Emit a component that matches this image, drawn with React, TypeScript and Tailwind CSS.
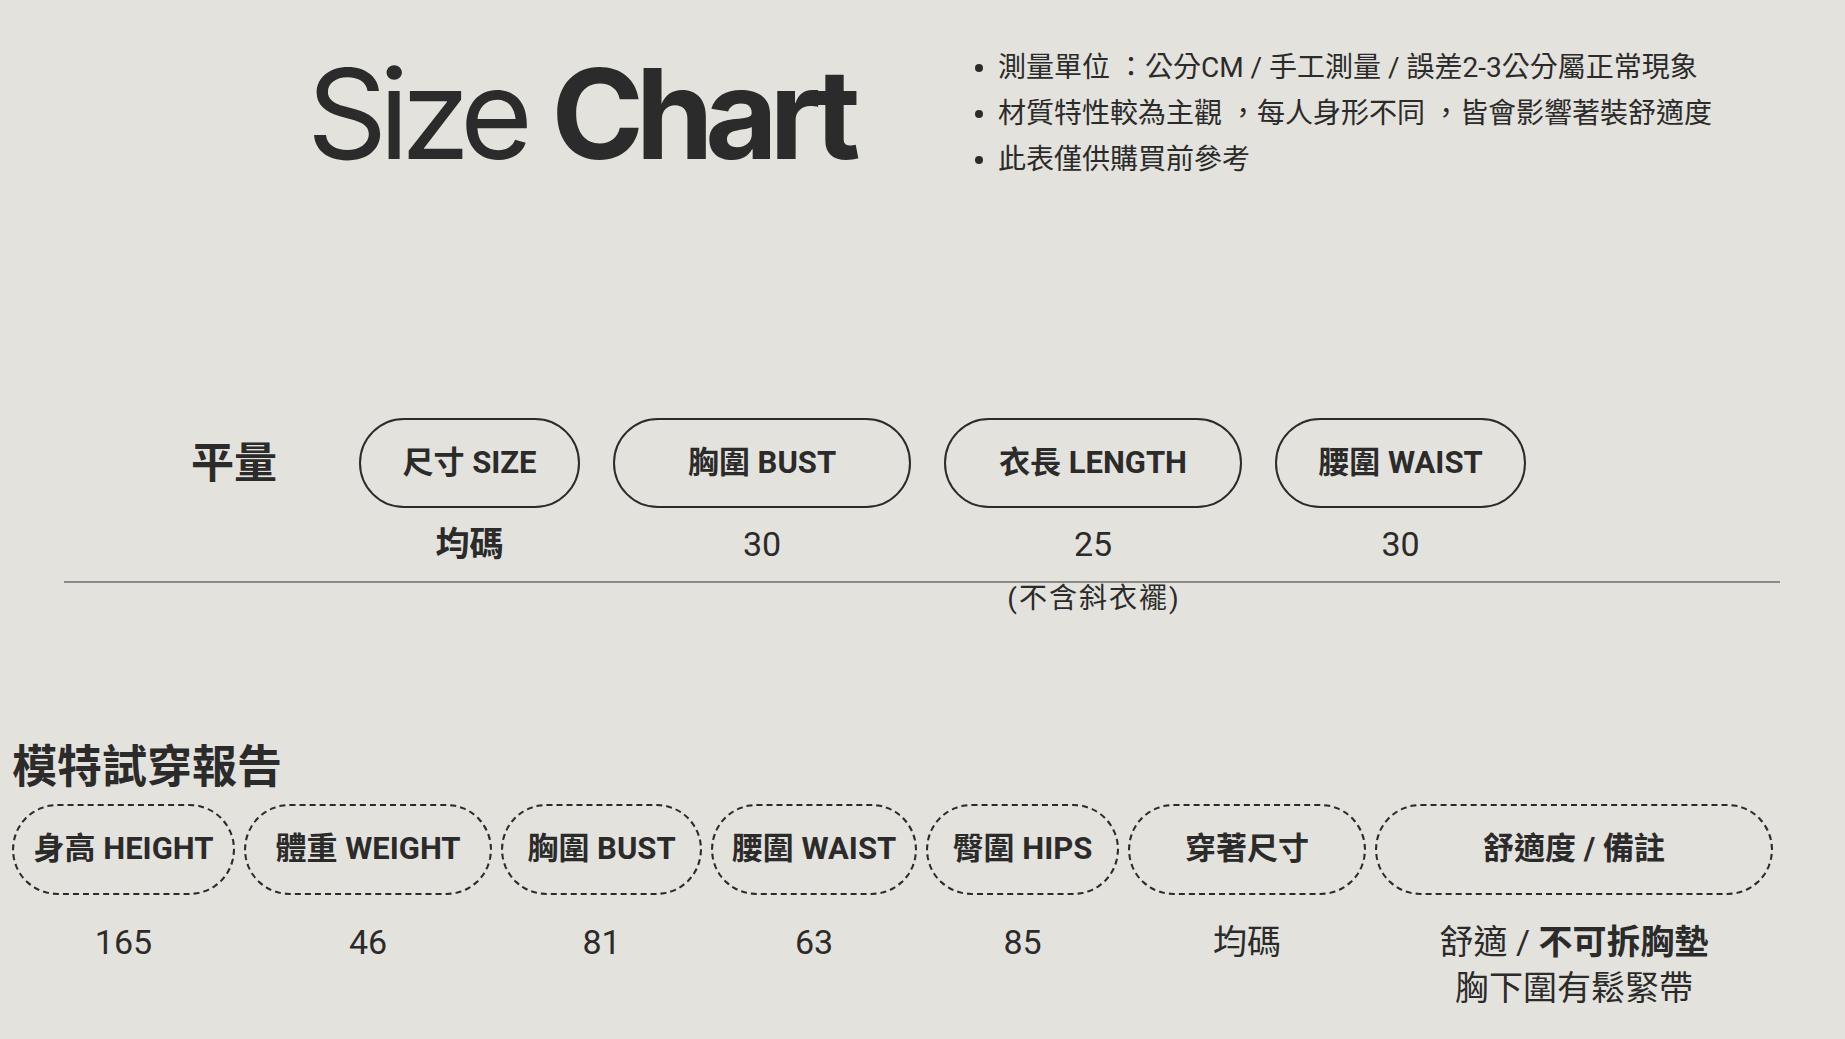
import React from "react";

const base = { fontFamily: 'Roboto, "Noto Sans CJK TC", "Noto Sans", sans-serif' };

const flat = [
  { label: "尺寸 SIZE", w: "w-[221px]", value: "均碼", bold: true },
  { label: "胸圍 BUST", w: "w-[298px]", value: "30" },
  { label: "衣長 LENGTH", w: "w-[298px]", value: "25" },
  { label: "腰圍 WAIST", w: "w-[251px]", value: "30" },
];

const fit = [
  { label: "身高 HEIGHT", w: "w-[223px]", value: ["165"] },
  { label: "體重 WEIGHT", w: "w-[248px]", value: ["46"] },
  { label: "胸圍 BUST", w: "w-[201px]", value: ["81"] },
  { label: "腰圍 WAIST", w: "w-[206px]", value: ["63"] },
  { label: "臀圍 HIPS", w: "w-[193px]", value: ["85"] },
  { label: "穿著尺寸", w: "w-[238px]", value: ["均碼"] },
  { label: "舒適度 / 備註", w: "w-[398px]", value: [] },
];

const notes = [
  "測量單位 ：公分CM / 手工測量 / 誤差2-3公分屬正常現象",
  "材質特性較為主觀 ，每人身形不同 ，皆會影響著裝舒適度",
  "此表僅供購買前參考",
];

export default function App() {
  return (
    <div
      className="w-[1845px] h-[1039px] overflow-hidden bg-[#e3e2dd] text-[#2b2b2b]"
      style={base}
    >
      {/* Header */}
      <div className="flex items-start pt-[45px]">
        <div className="w-[975px] pl-[307px] pt-[6px] shrink-0">
          <h1
            className="text-[125px] leading-none tracking-[-0.066em] whitespace-nowrap"
            style={{ fontFamily: "Inter, sans-serif" }}
          >
            Size <span className="font-bold">Chart</span>
          </h1>
        </div>
        <ul className="text-[28px] leading-[46px]">
          {notes.map((n) => (
            <li key={n} className="flex items-center gap-[15px] whitespace-nowrap">
              <span className="w-[8px] h-[8px] rounded-full bg-[#2b2b2b] shrink-0" />
              {n}
            </li>
          ))}
        </ul>
      </div>

      {/* 平量 */}
      <div className="flex items-start mt-[235px]">
        <div className="w-[359px] pl-[191px] h-[90px] flex items-center shrink-0">
          <span className="text-[43px] font-bold leading-none">平量</span>
        </div>
        <div className="flex gap-[33px]">
          {flat.map((c) => (
            <div key={c.label} className={`${c.w} flex flex-col items-center`}>
              <div className="w-full h-[90px] rounded-full border-2 border-[#2b2b2b] flex items-center justify-center text-[31px] font-bold whitespace-nowrap">
                {c.label}
              </div>
              <div
                className={`mt-[16px] text-[34px] leading-[40px] ${c.bold ? "font-bold" : ""}`}
              >
                {c.value}
              </div>
            </div>
          ))}
        </div>
      </div>
      <div className="ml-[64px] w-[1716px] h-[2px] bg-[#8a8a88] mt-[17px]" />
      <div className="flex">
        <div className="w-[945px] shrink-0" />
        <div className="w-[298px] text-center text-[28px] leading-[32px] tracking-[2px]">
          (不含斜衣襬)
        </div>
      </div>

      {/* 模特試穿報告 */}
      <h2 className="pl-[12px] mt-[128px] text-[45px] font-bold leading-[50px]">
        模特試穿報告
      </h2>
      <div className="flex gap-[9px] pl-[12px] mt-[11px]">
        {fit.map((c) => (
          <div key={c.label} className={`${c.w} flex flex-col items-center`}>
            <div className="w-full h-[91px] rounded-full border-2 border-dashed border-[#2b2b2b] flex items-center justify-center text-[31px] font-bold whitespace-nowrap">
              {c.label}
            </div>
            <div className="mt-[24px] text-[34px] leading-[46px] text-center whitespace-nowrap">
              {c.value.length > 0 ? (
                c.value.map((v) => <div key={v}>{v}</div>)
              ) : (
                <>
                  <div>
                    舒適 / <span className="font-bold">不可拆胸墊</span>
                  </div>
                  <div>胸下圍有鬆緊帶</div>
                </>
              )}
            </div>
          </div>
        ))}
      </div>
    </div>
  );
}
